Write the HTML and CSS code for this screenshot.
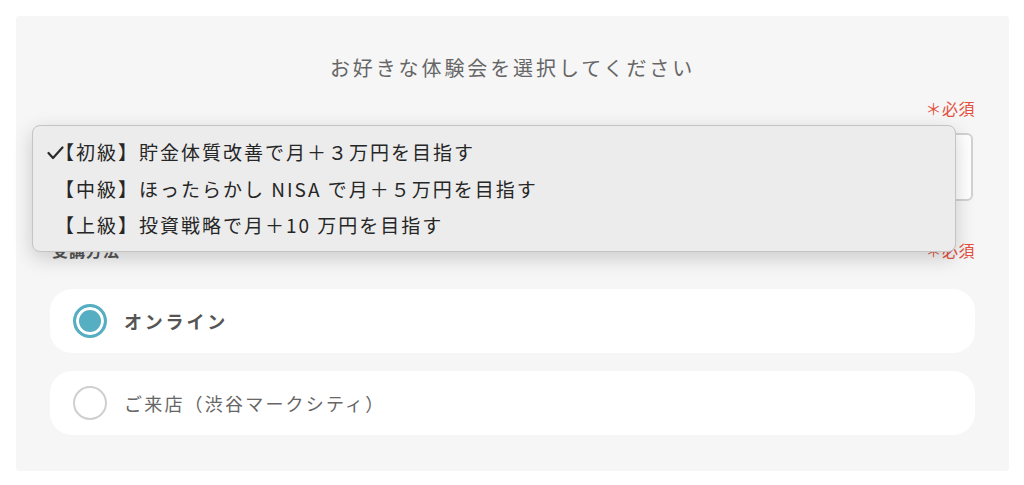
FILE: index.html
```html
<!DOCTYPE html>
<html lang="ja">
<head>
    <meta charset="UTF-8">
    <meta name="viewport" content="width=device-width, initial-scale=1.0">
    <title>体験会のお申し込み</title>
    <link rel="stylesheet" href="styles.css">
</head>
<body>
    <div class="panel">
        <h2 class="title">お好きな体験会を選択してください</h2>

        <div class="field-head">
            <span class="required">＊必須</span>
        </div>
        <div class="select-wrap">
            <div class="select-box"></div>
            <ul class="dropdown">
                <li class="option selected">
                    <svg class="check" width="17" height="14" viewBox="0 0 17 14"><polyline points="1.5,7 6,12 15.5,1.5" fill="none" stroke="#2a2a2a" stroke-width="2.2" stroke-linecap="round" stroke-linejoin="round"/></svg>
                    【初級】貯金体質改善で月＋３万円を目指す
                </li>
                <li class="option">【中級】ほったらかし NISA で月＋５万円を目指す</li>
                <li class="option">【上級】投資戦略で月＋10 万円を目指す</li>
            </ul>
        </div>

        <div class="field-head between">
            <span class="label">受講方法</span>
            <span class="required">＊必須</span>
        </div>
        <div class="radio-list">
            <label class="radio-card">
                <span class="radio checked"></span>
                <span class="radio-text bold">オンライン</span>
            </label>
            <label class="radio-card">
                <span class="radio"></span>
                <span class="radio-text">ご来店（渋谷マークシティ）</span>
            </label>
        </div>
    </div>
</body>
</html>
```

FILE: styles.css
```css
body {
    margin: 0;
    padding: 16px 15px 14px 16px;
    background-color: #ffffff;
    font-family: "Noto Sans CJK JP", "Noto Sans", sans-serif;
}

.panel {
    background-color: #f6f6f6;
    padding: 37px 34px 36px 34px;
    border-radius: 3px;
}

.title {
    margin: 0;
    text-align: center;
    font-size: 20px;
    font-weight: normal;
    line-height: 30px;
    letter-spacing: 2.9px;
    color: #666;
}

.field-head {
    display: flex;
    justify-content: flex-end;
    align-items: center;
    margin-top: 15px;
    height: 20px;
}

.field-head.between {
    justify-content: space-between;
    margin-top: 39px;
}

.required {
    color: #e2513f;
    font-size: 16px;
    letter-spacing: 0.5px;
}

.label {
    color: #555;
    font-size: 16px;
    font-weight: bold;
    padding-left: 2px;
    letter-spacing: 1px;
}

.select-wrap {
    position: relative;
    margin-top: 15px;
}

.select-box {
    height: 68px;
    box-sizing: border-box;
    margin-right: 2px;
    background-color: #fff;
    border: 2px solid #d2d2d2;
    border-radius: 6px;
}

.dropdown {
    position: absolute;
    left: -18px;
    top: -8px;
    width: 924px;
    height: 127px;
    box-sizing: border-box;
    margin: 0;
    padding: 8px 0 0 0;
    list-style: none;
    background-color: #ececec;
    border: 1px solid #c4c4c4;
    border-radius: 8px;
    box-shadow: 0 6px 20px rgba(0, 0, 0, 0.18);
}

.option {
    position: relative;
    padding-left: 22px;
    font-size: 19px;
    line-height: 36.5px;
    letter-spacing: 2px;
    color: #262626;
}

.check {
    position: absolute;
    left: 14px;
    top: 12px;
}

.radio-list {
    display: flex;
    flex-direction: column;
    gap: 18px;
    margin-top: 29px;
}

.radio-card {
    display: flex;
    align-items: center;
    gap: 17px;
    height: 64px;
    padding-left: 23px;
    background-color: #fff;
    border-radius: 22px;
    cursor: pointer;
}

.radio {
    width: 34px;
    height: 34px;
    box-sizing: border-box;
    border: 2px solid #cfcfcf;
    border-radius: 50%;
    background-color: #fff;
}

.radio.checked {
    border: 3px solid #55aec2;
    background-color: #55aec2;
    box-shadow: inset 0 0 0 3px #fff;
}

.radio-text {
    font-size: 18px;
    color: #666;
    letter-spacing: 2.2px;
}

.radio-text.bold {
    font-weight: bold;
    color: #555;
    letter-spacing: 2.8px;
}
```
